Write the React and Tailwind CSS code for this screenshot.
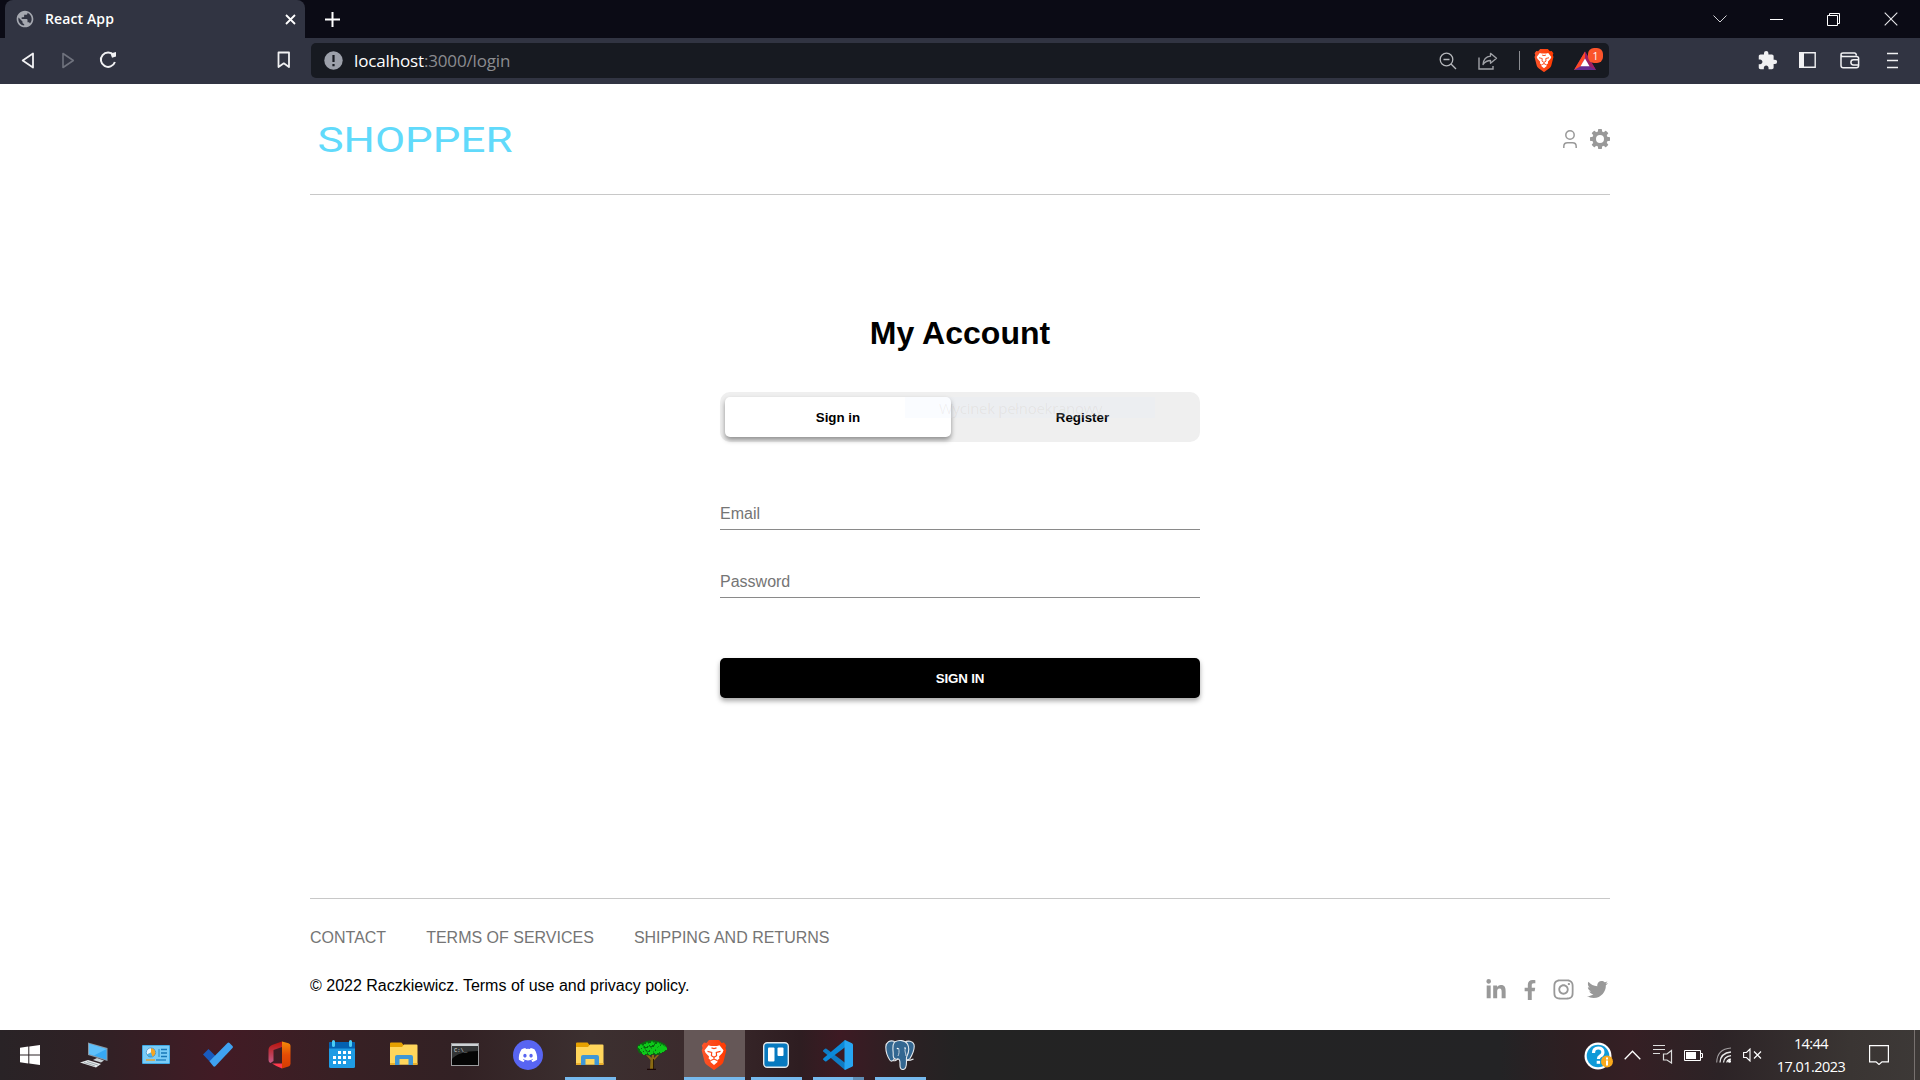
import React from "react";
import { FaLinkedinIn, FaFacebookF, FaInstagram, FaTwitter, FaDiscord } from "react-icons/fa";
import { MdExtension, MdPublic } from "react-icons/md";

const Svg = ({ w, h, children, vb, className = "" }) => (
  <svg width={w} height={h} viewBox={vb || `0 0 ${w} ${h}`} fill="none" className={`block shrink-0 ${className}`}>
    {children}
  </svg>
);

function BraveLion({ size, id }) {
  return (
    <svg width={size} height={size * 1.16} viewBox="0 0 26 30" className="block shrink-0">
      <defs>
        <linearGradient id={id} x1="0" x2="1">
          <stop offset="0" stopColor="#fb542b" />
          <stop offset="1" stopColor="#ff3a00" />
        </linearGradient>
      </defs>
      <path fill={`url(#${id})`} d="M8 0h10l2.6 2.8 2.4-.3 2.2 3-.8 2.3.9 2.4-2.8 11.2c-.4 1.5-1.2 2.6-2.5 3.5L13 30l-7-5.100c-1.300-.9-2.100-2-2.500-3.500L.7 10.200l.9-2.400-.8-2.300 2.200-3 2.400.3z" />
      <path fill="#fff" d="M7.500 5.200 10 5.800h6l2.500-.6 4 5-1 2.500-3.500 3.800.4 2-2.300 2 .4 1.500L13 25l-3.500-3 .4-1.500-2.300-2 .4-2-3.500-3.800-1-2.500z" />
      <path stroke={`url(#${id})`} strokeWidth="1.200" fill="none" d="M6.500 11.300l4.200 1-.3 3.400 2.600 1.600 2.600-1.600-.3-3.400 4.200-1M13 17.500v2M9.800 20.500 13 19l3.200 1.500M10.500 7.800 13 8.500l2.500-.7" />
    </svg>
  );
}

function TabStrip() {
  return (
    <div className="flex h-[38px] items-center bg-[#0b0b15] pl-[5px]">
      <div className="flex h-[38px] w-[300px] items-center rounded-t-lg bg-[#313442] pl-[10px] pr-[9px]">
        <MdPublic className="h-[20px] w-[20px] text-[#a5a8b0]" />
        <span className="ml-[10px] flex-1 font-['Open_Sans',sans-serif] text-[14px] font-semibold leading-5 tracking-[0.120px] text-white">React App</span>
        <Svg w={11} h={11}><path d="M1 1l9 9M10 1l-9 9" stroke="#fff" strokeWidth="1.800" /></Svg>
      </div>
      <Svg w={15} h={15} className="ml-5"><path d="M7.500 0v15M0 7.500h15" stroke="#fff" strokeWidth="2" /></Svg>
      <div className="ml-auto flex items-center pr-[22px]">
        <Svg w={14} h={8} className="mr-[43px]"><path d="M.5.5l6.500 6.500L13.500.5" stroke="#d0d0d4" /></Svg>
        <Svg w={13} h={13} className="mr-11"><path d="M0 6.500h13" stroke="#fff" /></Svg>
        <Svg w={13} h={13} className="mr-[44px]"><path d="M.5 2.500h10v10h-10zM2.500 2.500v-2h10v10h-2" stroke="#fff" /></Svg>
        <Svg w={14} h={14}><path d="M.7.7l12.600 12.600M13.300.7L.7 13.300" stroke="#e8e8ea" strokeWidth="1.100" /></Svg>
      </div>
    </div>
  );
}

function Toolbar() {
  return (
    <div className="flex h-[46px] items-center bg-[#313442] pb-[2px] pl-[21px] pr-[22px]">
      <Svg w={14} h={17}><path d="M12 1.500v14L1.700 8.500z" stroke="#f1f1f3" strokeWidth="1.800" strokeLinejoin="round" /></Svg>
      <Svg w={14} h={17} className="ml-[26px]"><path d="M2 1.500v14l10.300-7z" stroke="#6f727d" strokeWidth="1.600" strokeLinejoin="round" /></Svg>
      <Svg w={18} h={18} className="ml-[24px]">
        <path d="M14.700 4.200A7.200 7.200 0 1 0 15.900 11" stroke="#f1f1f3" strokeWidth="2" />
        <path d="M11.500 2.500 17 1v4.500L13 6.800z" fill="#f1f1f3" />
      </Svg>
      <Svg w={14} h={18} className="ml-[160px]"><path d="M1.500 1.500h10.500v14.500L6.800 12.300 1.500 16z" stroke="#f1f1f3" strokeWidth="1.800" strokeLinejoin="round" /></Svg>
      <div className="ml-5 mt-[1px] flex h-[35px] w-[1298px] items-center rounded-[5px] bg-[#171a21] pl-[13px] pr-[5px]">
        <Svg w={19} h={19}>
          <circle cx="9.500" cy="9.500" r="9.200" fill="#9ca0aa" />
          <path d="M9.500 4v7M9.500 13v2.200" stroke="#171a21" strokeWidth="2.200" />
        </Svg>
        <span className="ml-[11px] flex-1 font-['Open_Sans',sans-serif] text-[17px] leading-6 tracking-[-0.15px] text-[#8b8c90]">
          <span className="text-white">localhost</span>:3000/login
        </span>
        <Svg w={18} h={18} className="mr-[21px]">
          <circle cx="7.500" cy="7.500" r="6.300" stroke="#b5b7bb" strokeWidth="1.300" />
          <path d="M4.500 7.500h6M12 12l5 5" stroke="#b5b7bb" strokeWidth="1.400" />
        </Svg>
        <Svg w={20} h={18}>
          <path d="M1 5.500V17h14v-3" stroke="#a0a2a7" strokeWidth="1.400" />
          <path d="M12.500 1.300l6 5-6 5V8.500C9 8.500 7 9.700 5 12.500 5.500 7.500 8.500 4.500 12.500 4.200z" stroke="#a0a2a7" strokeWidth="1.300" strokeLinejoin="round" />
        </Svg>
        <div className="ml-[21px] mr-[14px] h-[19px] w-px bg-[#8b8d92]" />
        <BraveLion size={20} id="lionbar" />
        <Svg w={31} h={24} className="ml-[19px] -translate-y-px">
          <path d="M12 3.500 1 22h22z" fill="#662d91" />
          <path d="M12 3.500 1 22 8 18l4-8z" fill="#ff4724" />
          <path d="M12 3.500V10l4 8 7 4z" fill="#9e1f63" />
          <path d="M12 10.500 7.500 18.300h9z" fill="#fff" />
          <rect x="15" y="0" width="15" height="15" rx="6" fill="#fb542b" />
          <text x="22.500" y="11.500" fontSize="10.500" textAnchor="middle" fill="#fff" fontFamily="Open Sans, sans-serif">1</text>
        </Svg>
      </div>
      <MdExtension className="ml-auto h-[21px] w-[21px] text-[#f1f1f3]" />
      <Svg w={17} h={16} className="ml-[21px]">
        <path d="M.8.8h15.400v14.400H.8z" stroke="#f1f1f3" strokeWidth="1.400" />
        <path d="M0 0h5v16H0z" fill="#f1f1f3" />
      </Svg>
      <Svg w={20} h={17} className="ml-[24px]">
        <path d="M1 3v10.500q0 2.300 2.300 2.300h13q2.300 0 2.300-2.300V6.500q0-2-2.300-2H3Q1 4.500 1 2.700 1 1 3 1h11.500q1.500 0 2 2.500" stroke="#f1f1f3" strokeWidth="1.500" />
        <path d="M19 7.700h-5.500a2.600 2.600 0 0 0 0 5.200H19" stroke="#f1f1f3" strokeWidth="1.500" />
      </Svg>
      <Svg w={12} h={17} className="ml-[26px]"><path d="M1 1.500h11M1 8.500h11M1 15.500h11" stroke="#f1f1f3" strokeWidth="1.500" /></Svg>
    </div>
  );
}

const TEETH = [0, 45, 90, 135, 180, 225, 270, 315];

function Header() {
  return (
    <header className="flex h-[111px] items-center border-b border-[#c8c8c8]">
      <Svg w={206} h={55} className="ml-[6px]">
        <text x="1.500" y="39.500" fontSize="35.500" textLength="195" lengthAdjust="spacingAndGlyphs" fill="#61dafb" fontFamily="Roboto, sans-serif">SHOPPER</text>
      </Svg>
      <div className="ml-auto flex items-center gap-[13px]">
        <Svg w={14} h={18}>
          <circle cx="7" cy="5" r="4.200" stroke="#999" strokeWidth="1.500" />
          <path d="M.8 18v-1.500q0-3.700 3.700-3.700h5q3.700 0 3.700 3.700V18" stroke="#999" strokeWidth="1.500" />
        </Svg>
        <Svg w={20} h={20}>
          <circle cx="10" cy="10" r="5.900" stroke="#999" strokeWidth="3.800" />
          {TEETH.map((a) => (
            <rect key={a} x="8" y="0" width="4" height="4" rx=".7" fill="#999" transform={`rotate(${a} 10 10)`} />
          ))}
        </Svg>
      </div>
    </header>
  );
}

function Login() {
  return (
    <main className="mx-auto flex w-[480px] flex-col">
      <h1 className="mt-[120px] text-center text-[32px] font-bold leading-9 tracking-[0.050px]">My Account</h1>
      <div className="relative mt-[41px] flex h-[50px] justify-between rounded-[10px] bg-[#efefef] p-[5px]">
        <button className="h-10 w-[226px] rounded-[5px] bg-white pt-[2px] text-[13.333px] font-bold shadow-[0_3px_5px_rgba(0,0,0,0.4)]">Sign in</button>
        <button className="h-10 w-[225px] pt-[2px] text-[13.333px] font-bold">Register</button>
        <div className="pointer-events-none absolute left-[185px] top-[5px] flex h-[21px] w-[250px] items-center bg-[#e0ebff]/15 pl-[34px] pt-[2px] font-['Open_Sans',sans-serif] text-[15px] tracking-[-0.3px] text-[#806040]/8">Wycinek pełnoekranowy</div>
      </div>
      <input placeholder="Email" className="mt-[58px] h-[30px] border-b border-[#8a8a8a] pb-[2px] text-base outline-none placeholder:text-[#757575]" />
      <input placeholder="Password" className="mt-[38px] h-[30px] border-b border-[#8a8a8a] pb-[2px] text-base outline-none placeholder:text-[#757575]" />
      <button className="mt-[60px] h-10 rounded-[5px] bg-black pt-[2px] text-[13.333px] font-bold tracking-[-0.15px] text-white shadow-[0_3px_5px_rgba(0,0,0,0.35)]">SIGN IN</button>
    </main>
  );
}

function Footer() {
  return (
    <footer className="mt-auto flex h-[132px] flex-col border-t border-[#c8c8c8]">
      <nav className="mt-[28px] flex gap-10 text-base leading-[22px] text-[#757575]">
        <a>CONTACT</a>
        <a>TERMS OF SERVICES</a>
        <a>SHIPPING AND RETURNS</a>
      </nav>
      <div className="mt-[25px] flex items-start justify-between">
        <p className="text-base leading-[24px] text-black">© 2022 Raczkiewicz. Terms of use and privacy policy.</p>
        <div className="mt-[4px] flex items-center pr-[2px] text-[#999]">
          <FaLinkedinIn className="h-[22px] w-[22px]" />
          <FaFacebookF className="ml-[13px] h-[20px] w-[20px]" />
          <FaInstagram className="ml-[12px] h-[23px] w-[23px]" />
          <FaTwitter className="ml-[12px] h-[21px] w-[21px]" />
        </div>
      </div>
    </footer>
  );
}

const Folder = () => (
  <Svg w={28} h={24} className="-translate-y-px">
    <path d="M0 1.500Q0 .5 1 .5h10.500l2 2.500H27v19H0z" fill="#e5a000" />
    <path d="M0 5h12l2-2.500h12.500q1 0 1 1V22q0 .8-1 .8H1q-1 0-1-.8z" fill="#ffd65c" />
    <path d="M5 23V15q0-2 2-2h14q2 0 2 2v8h-4.500v-6h-9v6z" fill="#3f97d6" />
    <path d="M0 21h5v2H0zM23 21h4.500v2H23z" fill="#e9ae2d" />
  </Svg>
);

const Windows = () => (
  <Svg w={20} h={20}><path d="M0 2.700 8.300 1.600v7.900H0zM9.300 1.400 20 0v9.500H9.300zM0 10.500h8.300v7.900L0 17.300zM9.300 10.500H20V20L9.300 18.600z" fill="#fff" /></Svg>
);

const Computer = () => (
  <Svg w={28} h={26}>
    <path d="M8 .5 27.500 6v13L8 13z" fill="#8b9aa5" />
    <path d="M9 1.700 26.500 7v10.800L9 12z" fill="#36a9f4" />
    <path d="M9 1.700 26.500 7 14 13.500 9 12z" fill="#5fc0fa" />
    <path d="M13 18l4-2 7 2.500-3 2z" fill="#c7d0d4" />
    <path d="M0 20.500 8 18l13 4-5 3.500z" fill="#e5eaec" />
    <path d="M4 20.500l11 3.500M7 19.500l11 3.500" stroke="#8e979b" strokeWidth=".8" />
  </Svg>
);

const ControlPanel = () => (
  <Svg w={28} h={19} className="-translate-y-px">
    <rect width="28" height="19" rx="1" fill="#3fa8e4" />
    <rect x="1" y="1" width="26" height="17" fill="#7accf7" />
    <circle cx="9" cy="7.500" r="5" fill="#e7f6ff" />
    <path d="M9 7.500V3a4.500 4.500 0 1 1-4 6.500z" fill="#f5a623" />
    <path d="M9 7.500 5 9.500a4.500 4.500 0 0 0 5.500 2.300z" fill="#48b2ee" />
    <circle cx="9" cy="7.500" r="4.700" stroke="#2381c5" strokeWidth=".7" />
    <path d="M19 4.500h6M19 8h6M19 11.500h6" stroke="#1777b8" strokeWidth="1.500" />
    <path d="M17 4v8" stroke="#1777b8" strokeWidth=".8" />
    <path d="M4 15h9" stroke="#f59b13" strokeWidth="1.300" /><path d="M14 15h10" stroke="#1777b8" strokeWidth="1.200" />
  </Svg>
);

const Todo = () => (
  <Svg w={30} h={25} className="-translate-y-px">
    <path d="M0 12.500 5.500 7l10 10-5 6.500z" fill="#195abd" />
    <path d="M6.500 19.300 24.500 1q1-.8 2 .1l3 3q.8.900 0 1.800L12.300 24.300q-1 .8-2 0z" fill="#3fa2f1" />
  </Svg>
);

const Office = () => (
  <Svg w={23} h={28} className="-translate-x-px">
    <defs>
      <linearGradient id="offl" x1="0" y1="0" x2="0" y2="1"><stop offset="0" stopColor="#b61209" /><stop offset="1" stopColor="#c35a86" /></linearGradient>
      <linearGradient id="offr" x1="0" y1="0" x2="0" y2="1"><stop offset="0" stopColor="#f48b08" /><stop offset=".5" stopColor="#e64b05" /><stop offset="1" stopColor="#d53c03" /></linearGradient>
    </defs>
    <path d="M14 .5 4 4Q.5 5.500.5 9v10q0 2.500 2 3l3-2V9l8.500-3z" fill="url(#offl)" />
    <path d="M14 .5 20.500 2.300q2 .7 2 2.500v18q0 2-2 2.700L14 27.500z" fill="url(#offr)" />
    <path d="M4 22.500h10v5Q7.500 25 4 22.500z" fill="#ff3a4e" />
  </Svg>
);

const Calendar = () => (
  <Svg w={26} h={28} className="-translate-y-px">
    <rect y="2" width="26" height="26" rx="1.500" fill="#1f9ce4" />
    <path d="M0 8.500V3.500Q0 2 1.500 2h23Q26 2 26 3.500v5z" fill="#0461b1" />
    <path d="M4.500 1.500v4M21.500 1.500v4" stroke="#4bcdf6" strokeWidth="3" strokeLinecap="round" />
    <path d="M9 12.500h13M4 17.500h18M4 22.500h13" stroke="#fff" strokeWidth="3" strokeDasharray="3 2" />
  </Svg>
);

const Terminal = () => (
  <Svg w={28} h={23} className="-translate-x-px -translate-y-px">
    <rect x=".5" y=".5" width="27" height="22" fill="#050505" stroke="#9b9c9e" />
    <path d="M1 1h26v2H1z" fill="#ced2d5" />
    <path d="M1 3h26v5C14 8 5 11 1 16z" fill="#333536" />
    <text x="3" y="9" fontSize="5.500" fill="#ddd" fontFamily="Liberation Mono, monospace">C:\_</text>
  </Svg>
);

const Discord = () => (
  <div className="flex h-[30px] w-[30px] items-center justify-center rounded-full bg-[#5865f2]">
    <FaDiscord className="h-[20px] w-[20px] text-white" />
  </div>
);

const LEAVES = [[4, 6], [6, 9], [10, 4], [15, 3], [21, 4], [25, 6], [18, 7], [12, 8], [8, 12], [14, 12], [20, 11], [25, 10], [28, 8], [16, 9], [22, 8]];

const Tree = () => (
  <Svg w={30} h={30}>
    <path d="M13 29 13.500 20 9 15l2-1 3.500 4 .5-3h2v3l4-4 1 1-5 5.500V29z" fill="#8a6a12" />
    <path d="M16.500 19v10" stroke="#2c1c05" strokeWidth="1" />
    <path d="M10 29.500h9" stroke="#190606" strokeWidth="1.500" />
    <path d="M0 8.500 1 5l4-2 4-2 7-1 8 2 4 2 2 3-1 4-4 1.500-3 2.500-6-.5-5 1-4-1.500-5-1z" fill="#0a6a10" />
    {LEAVES.map(([x, y]) => (
      <path key={`${x}-${y}`} d={`M${x - 3} ${y}h2v-1.500h2v1h2v1h-1v1.500h-2v1h-2v-1h-1z`} fill="#0dc819" />
    ))}
  </Svg>
);

const Trello = () => (
  <Svg w={26} h={26}>
    <rect x=".7" y=".7" width="24.600" height="24.600" rx="3.500" fill="#0779bf" stroke="#e6e9eb" strokeWidth="1.400" />
    <rect x="5" y="5.500" width="6.500" height="14" rx="1" fill="#fff" />
    <rect x="14.500" y="5.500" width="6" height="8.500" rx="1" fill="#fff" />
  </Svg>
);

const VsCode = () => (
  <Svg w={30} h={30}>
    <path d="M0 10.500 2 8.800q.7-.5 1.500 0L23 23.500 22 30 .2 11.500z" fill="#0f7cc4" />
    <path d="M0 19.500 2 21.200q.7.500 1.500 0L23 6.500 22 0 .2 18.500z" fill="#0b8ad9" />
    <path d="M22 0 29 3.200q1 .5 1 1.500v20.600q0 1-1 1.500L22 30q-.5-.3-.5-1V1q0-.700.5-1z" fill="#27a5f1" />
  </Svg>
);

const Elephant = () => (
  <Svg w={30} h={30}>
    <g fill="#336791" stroke="#e4e9ed" strokeWidth="1.100" strokeLinejoin="round">
      <path d="M19 2.500C23 0 28 1 29 4.500c.8 4-1.500 10-4.300 14.500l-3 1-3-9z" />
      <path d="M9 1.200C5 0 1 2 .8 7c0 4 2 10 4 13 1.500 2 3 1 4.500-1L12 9z" />
      <path d="M9.500 2C14-.2 20-.2 22.500 4c1.500 3 1.500 8-.5 12-1 2-.5 3-.5 5.500 0 4-1 8-3.500 8s-3.200-2-3-6c0-3-.2-4.500-2-4.500-3 1-5-1-4.800-4C8.500 11 6.500 6 9.500 2z" />
      <path d="M21.500 20.500c2.500 0 5-.3 7-1.500" fill="none" />
      <path d="M13 18.500c-1 2-3.500 2.500-5 2" fill="none" />
      <path d="M13.500 8c1 3 .5 6-.5 8M20.500 8c-1.500 3 .5 5 .5 8" fill="none" strokeWidth=".8" />
    </g>
    <circle cx="12.500" cy="8.500" r=".8" fill="#fff" /><circle cx="20" cy="8" r=".8" fill="#fff" />
  </Svg>
);

const APPS = [
  { id: "pc", icon: <Computer /> },
  { id: "panel", icon: <ControlPanel /> },
  { id: "todo", icon: <Todo /> },
  { id: "office", icon: <Office /> },
  { id: "cal", icon: <Calendar /> },
  { id: "folder", icon: <Folder /> },
  { id: "term", icon: <Terminal /> },
  { id: "discord", icon: <Discord /> },
  { id: "files", icon: <Folder />, open: true },
  { id: "tree", icon: <Tree /> },
  { id: "brave", icon: <BraveLion size={26} id="liontask" />, active: true },
  { id: "trello", icon: <Trello />, open: true },
  { id: "code", icon: <VsCode />, open: true, stacked: true },
  { id: "pg", icon: <Elephant />, open: true },
];

function Taskbar() {
  return (
    <div className="flex h-[50px] bg-[linear-gradient(90deg,#292326_0px,#2f2125_90px,#421b25_220px,#382024_340px,#322124_460px,#3c3030_590px,#3b2a2c_700px,#2e1d21_800px,#3d1a23_840px,#2c2023_900px,#232323_960px,#232325_1500px,#2e1f22_1570px,#351f24_1630px,#2c2326_1720px,#3a3533_1850px,#3d3937_1920px)]">
      <div className="flex w-[63px] items-center pl-5"><Windows /></div>
      {APPS.map((a) => (
        <div key={a.id} className="relative flex w-[62px] items-center justify-center">
          {a.active && <div className="absolute inset-y-0 left-px right-0 border-b-[3px] border-[#76b9ed] bg-[#655757]" />}
          <div className="relative">{a.icon}</div>
          {a.open && <div className="absolute bottom-0 left-[6px] h-[3px] w-[51px] bg-[#76b9ed]" />}
          {a.stacked && <div className="absolute bottom-0 left-[46px] h-[3px] w-[11px] bg-[#5f8db5]" />}
        </div>
      ))}
      <div className="ml-auto flex items-center">
        <Svg w={30} h={30} className="translate-y-px">
          <circle cx="14" cy="15" r="13.500" fill="#fff" /><circle cx="14" cy="15" r="11.300" fill="#0f9ad8" />
          <path d="M9.500 12q0-5 4.700-5t4.700 4.200q0 2.400-2.500 3.700-2 1.200-2 3.100" stroke="#fff" strokeWidth="3.200" />
          <path d="M12.700 19.800h3.400v3h-3.400z" fill="#fff" />
          <circle cx="23" cy="20.500" r="6" fill="#f9a91c" /><path d="M23 16.500v2M23 19.500v5" stroke="#fff" strokeWidth="2" />
        </Svg>
        <Svg w={17} h={10} className="ml-[10px]"><path d="M.7 9.300l7.800-8 7.800 8" stroke="#fff" strokeWidth="1.300" /></Svg>
        <Svg w={20} h={20} className="ml-[12px] -translate-y-px">
          <path d="M0 1.500h12M0 5.500h12M0 9.500h7" stroke="#ddd" strokeWidth="1.200" />
          <path d="M10.500 10v6h3.500l4.500 3V6.500L14 10z" stroke="#ddd" strokeWidth="1.200" />
        </Svg>
        <Svg w={19} h={11} className="ml-[11px]">
          <path d="M.5.5h16v10H.5zM17 3.500h1.500v4H17" stroke="#fff" /><path d="M2 2h10v7H2z" fill="#fff" />
        </Svg>
        <Svg w={16} h={16} className="ml-[13px]">
          <path d="M.700 15.500Q1 2 15 1" stroke="#a29ea0" strokeWidth="1.100" />
          <path d="M4 15.500Q4.500 6 15 5M7.500 15.500Q8 9.500 15 8.700" stroke="#e8e8e8" strokeWidth="1.300" />
          <path d="M10.800 15.500q.5-3 4.200-3.300" stroke="#fff" strokeWidth="1.300" /><circle cx="13.500" cy="14.200" r="1.500" fill="#fff" />
        </Svg>
        <Svg w={19} h={14} className="ml-[11px]">
          <path d="M.6 4.500v5h2.900l3.500 3.500V1L3.500 4.500z" stroke="#fff" strokeWidth="1.100" /><path d="M11 3.500l7 7M18 3.500l-7 7" stroke="#fff" strokeWidth="1.200" />
        </Svg>
        <div className="ml-[12px] mr-px flex w-[74px] flex-col items-center font-['Open_Sans',sans-serif] text-[14.500px] leading-[23px] tracking-[-0.55px] text-white">
          <span>14:44</span>
          <span>17.01.2023</span>
        </div>
        <Svg w={20} h={20} className="ml-[20px]"><path d="M.6.600h18.800v16.200H13L10 19.500 7 16.800H.6z" stroke="#fff" strokeWidth="1.200" /></Svg>
        <div className="ml-[25px] mr-[5px] h-[50px] w-px bg-[#77716f]" />
      </div>
    </div>
  );
}

export default function App() {
  return (
    <div className="flex h-[1080px] w-[1920px] flex-col overflow-hidden bg-white font-['Liberation_Sans',Arial,sans-serif] text-black">
      <TabStrip />
      <Toolbar />
      <div className="mx-auto flex w-[1300px] flex-1 flex-col">
        <Header />
        <Login />
        <Footer />
      </div>
      <Taskbar />
    </div>
  );
}
